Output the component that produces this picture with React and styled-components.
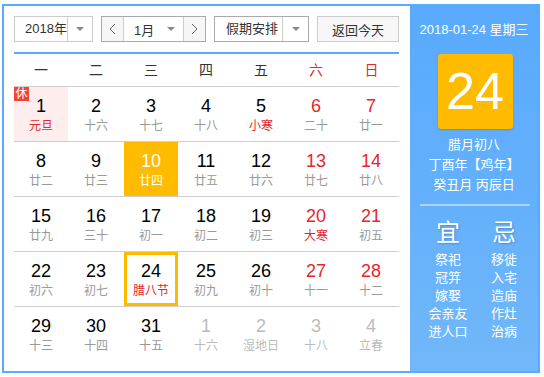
import React from "react";
import styled, { createGlobalStyle, css } from "styled-components";

const BLUE = "#5aabfd";
const ORANGE = "#ffbb00";
const RED = "#e5262d";
const FONT = `"Liberation Sans", Arial, "Noto Sans CJK SC", sans-serif`;

const GlobalStyle = createGlobalStyle`
  html, body { margin: 0; padding: 0; background: #fff; }
  body { font-family: ${FONT}; }
  * { box-sizing: border-box; }
`;

const Frame = styled.div`
  margin: 4px 0 0 2px;
  width: 538px;
  height: 369px;
  border: 2px solid ${BLUE};
  display: flex;
`;

const Main = styled.div`
  width: 406px;
  padding: 10px 11px 10px 10px;
  background: #fff;
`;

const Toolbar = styled.div`
  display: flex;
  justify-content: space-between;
  height: 26px;
`;

const Select = styled.div`
  display: flex;
  height: 26px;
  border: 1px solid ${(p) => p.$border || "#ccc"};
  background: #fff;
  width: ${(p) => p.$w}px;
  color: #333;
  font-size: 13px;
`;

const SelectText = styled.div`
  flex: 1;
  display: flex;
  align-items: center;
  padding-left: ${(p) => p.$pl}px;
  line-height: 24px;
  border-right: ${(p) => (p.$divider ? "1px solid #ccc" : "none")};
`;

const ArrowBox = styled.div`
  width: ${(p) => p.$w}px;
  display: flex;
  align-items: center;
  justify-content: center;
`;

const Caret = styled.span`
  width: 0;
  height: 0;
  border-left: 4px solid transparent;
  border-right: 4px solid transparent;
  border-top: 4px solid #888;
`;

const MonthGroup = styled.div`
  display: flex;
  height: 26px;
  width: 105px;
  border: 1px solid #aaa;
  color: #333;
  font-size: 13px;
`;

const StepButton = styled.div`
  width: 22px;
  background: #f6f6f6;
  display: flex;
  align-items: center;
  justify-content: center;
  ${(p) => (p.$side === "left" ? "border-right: 1px solid #ccc;" : "border-left: 1px solid #ccc;")}
`;

const MonthSelect = styled.div`
  flex: 1;
  display: flex;
  align-items: center;
  padding-left: 10px;
  background: #fff;
`;

const MonthCaret = styled.div`
  margin-left: auto;
  margin-right: 8px;
  display: flex;
`;

const TodayButton = styled.div`
  width: 82px;
  height: 26px;
  border: 1px solid #ccc;
  background: #f7f7f7;
  color: #333;
  font-size: 13px;
  display: flex;
  align-items: center;
  justify-content: center;
`;

const BlueRule = styled.div`
  height: 2px;
  margin-top: 10px;
  background: ${BLUE};
`;

const Grid7 = css`
  display: grid;
  grid-template-columns: repeat(6, 54px) 55px;
  column-gap: 1px;
  width: 385px;
`;

const WeekHead = styled.div`
  ${Grid7};
  height: 32px;
  align-items: center;
`;

const WeekDay = styled.div`
  text-align: center;
  font-size: 14px;
  line-height: 32px;
  color: ${(p) => (p.$weekend ? RED : "#333")};
`;

const Row = styled.div`
  ${Grid7};
  border-top: 1px solid #cfcfcf;
  height: 55px;
`;

const Cell = styled.div`
  position: relative;
  width: 54px;
  height: 54px;
  display: flex;
  flex-direction: column;
  align-items: center;
  padding-top: ${(p) => (p.$today ? 6 : 9)}px;
  background: ${(p) => (p.$selected ? ORANGE : p.$holiday ? "#fdeded" : "transparent")};
  border: ${(p) => (p.$today ? `3px solid ${ORANGE}` : "none")};
`;

const DayNum = styled.div`
  font-family: ${FONT};
  font-size: 18px;
  line-height: 21px;
  color: ${(p) =>
    p.$selected ? "#fff" : p.$other ? "#bbb" : p.$weekend ? RED : "#000"};
`;

const Lunar = styled.div`
  font-size: 12px;
  line-height: 18px;
  white-space: nowrap;
  color: ${(p) =>
    p.$selected ? "#fff" : p.$other ? "#bbb" : p.$fest ? RED : "#999"};
`;

const Badge = styled.span`
  position: absolute;
  left: 0;
  top: 0;
  width: 15px;
  height: 14px;
  background: #f44336;
  color: #fff;
  font-size: 12px;
  line-height: 14px;
  text-align: center;
`;

const Side = styled.div`
  width: 128px;
  background: linear-gradient(180deg, #59aafd 0%, #64b0fb 55%, #72b8f9 100%);
  color: #fff;
  padding-top: 14px;
  display: flex;
  flex-direction: column;
  align-items: stretch;
`;

const DateLine = styled.div`
  text-align: center;
  font-size: 13px;
  line-height: 20px;
`;

const BigDay = styled.div`
  align-self: center;
  margin: 14px 0 0 2px;
  width: 75px;
  height: 75px;
  border-radius: 3px;
  background: ${ORANGE};
  box-shadow: 0 1px 2px rgba(0, 0, 0, 0.15);
  display: flex;
  align-items: center;
  justify-content: center;
  font-family: ${FONT};
  font-size: 52px;
  line-height: 75px;
`;

const LunarInfo = styled.div`
  margin-top: 6px;
  text-align: center;
  font-size: 13px;
  line-height: 20px;
`;

const SideRule = styled.div`
  height: 2px;
  margin: 9px 8px 0 10px;
  background: rgba(255, 255, 255, 0.45);
`;

const AdviceGrid = styled.div`
  display: grid;
  grid-template-columns: 56px 56px;
  padding-left: 10px;
  margin-top: 12px;
`;

const AdviceCol = styled.div`
  display: flex;
  flex-direction: column;
  align-items: center;
`;

const AdviceHead = styled.div`
  font-size: 24px;
  line-height: 30px;
  text-shadow: 1px 1px 2px rgba(0, 0, 0, 0.2);
  margin-bottom: 3px;
`;

const AdviceItem = styled.div`
  font-size: 13px;
  line-height: 18px;
  white-space: nowrap;
`;

const Chevron = ({ dir }) => (
  <svg width="7" height="12" viewBox="0 0 7 12">
    <polyline
      points={dir === "left" ? "6,1 1,6 6,11" : "1,1 6,6 1,11"}
      fill="none"
      stroke="#666"
      strokeWidth="1"
    />
  </svg>
);

const weeks = ["一", "二", "三", "四", "五", "六", "日"];

const rows = [
  [
    { d: 1, l: "元旦", fest: true, holiday: true },
    { d: 2, l: "十六" },
    { d: 3, l: "十七" },
    { d: 4, l: "十八" },
    { d: 5, l: "小寒", fest: true },
    { d: 6, l: "二十" },
    { d: 7, l: "廿一" },
  ],
  [
    { d: 8, l: "廿二" },
    { d: 9, l: "廿三" },
    { d: 10, l: "廿四", selected: true },
    { d: 11, l: "廿五" },
    { d: 12, l: "廿六" },
    { d: 13, l: "廿七" },
    { d: 14, l: "廿八" },
  ],
  [
    { d: 15, l: "廿九" },
    { d: 16, l: "三十" },
    { d: 17, l: "初一" },
    { d: 18, l: "初二" },
    { d: 19, l: "初三" },
    { d: 20, l: "大寒", fest: true },
    { d: 21, l: "初五" },
  ],
  [
    { d: 22, l: "初六" },
    { d: 23, l: "初七" },
    { d: 24, l: "腊八节", fest: true, today: true },
    { d: 25, l: "初九" },
    { d: 26, l: "初十" },
    { d: 27, l: "十一" },
    { d: 28, l: "十二" },
  ],
  [
    { d: 29, l: "十三" },
    { d: 30, l: "十四" },
    { d: 31, l: "十五" },
    { d: 1, l: "十六", other: true },
    { d: 2, l: "湿地日", other: true },
    { d: 3, l: "十八", other: true },
    { d: 4, l: "立春", other: true },
  ],
];

const good = ["祭祀", "冠笄", "嫁娶", "会亲友", "进人口"];
const bad = ["移徙", "入宅", "造庙", "作灶", "治病"];

export default function App() {
  return (
    <>
      <GlobalStyle />
      <Frame>
        <Main>
          <Toolbar>
            <Select $w={79}>
              <SelectText $pl={10} $divider>2018年</SelectText>
              <ArrowBox $w={24}>
                <Caret />
              </ArrowBox>
            </Select>
            <MonthGroup>
              <StepButton $side="left">
                <Chevron dir="left" />
              </StepButton>
              <MonthSelect>
                1月
                <MonthCaret>
                  <Caret />
                </MonthCaret>
              </MonthSelect>
              <StepButton $side="right">
                <Chevron dir="right" />
              </StepButton>
            </MonthGroup>
            <Select $w={95} $border="#aaa">
              <SelectText $pl={11} $divider>假期安排</SelectText>
              <ArrowBox $w={25}>
                <Caret />
              </ArrowBox>
            </Select>
            <TodayButton>返回今天</TodayButton>
          </Toolbar>
          <BlueRule />
          <WeekHead>
            {weeks.map((w, i) => (
              <WeekDay key={w} $weekend={i >= 5}>
                {w}
              </WeekDay>
            ))}
          </WeekHead>
          {rows.map((row, ri) => (
            <Row key={ri}>
              {row.map((c, ci) => (
                <Cell
                  key={ci}
                  $selected={c.selected}
                  $holiday={c.holiday}
                  $today={c.today}
                >
                  {c.holiday && <Badge>休</Badge>}
                  <DayNum $selected={c.selected} $other={c.other} $weekend={ci >= 5}>
                    {c.d}
                  </DayNum>
                  <Lunar $selected={c.selected} $other={c.other} $fest={c.fest}>
                    {c.l}
                  </Lunar>
                </Cell>
              ))}
            </Row>
          ))}
        </Main>
        <Side>
          <DateLine>2018-01-24 星期三</DateLine>
          <BigDay>24</BigDay>
          <LunarInfo>
            <div>腊月初八</div>
            <div>丁酉年【鸡年】</div>
            <div>癸丑月 丙辰日</div>
          </LunarInfo>
          <SideRule />
          <AdviceGrid>
            <AdviceCol>
              <AdviceHead>宜</AdviceHead>
              {good.map((g) => (
                <AdviceItem key={g}>{g}</AdviceItem>
              ))}
            </AdviceCol>
            <AdviceCol>
              <AdviceHead>忌</AdviceHead>
              {bad.map((g) => (
                <AdviceItem key={g}>{g}</AdviceItem>
              ))}
            </AdviceCol>
          </AdviceGrid>
        </Side>
      </Frame>
    </>
  );
}
